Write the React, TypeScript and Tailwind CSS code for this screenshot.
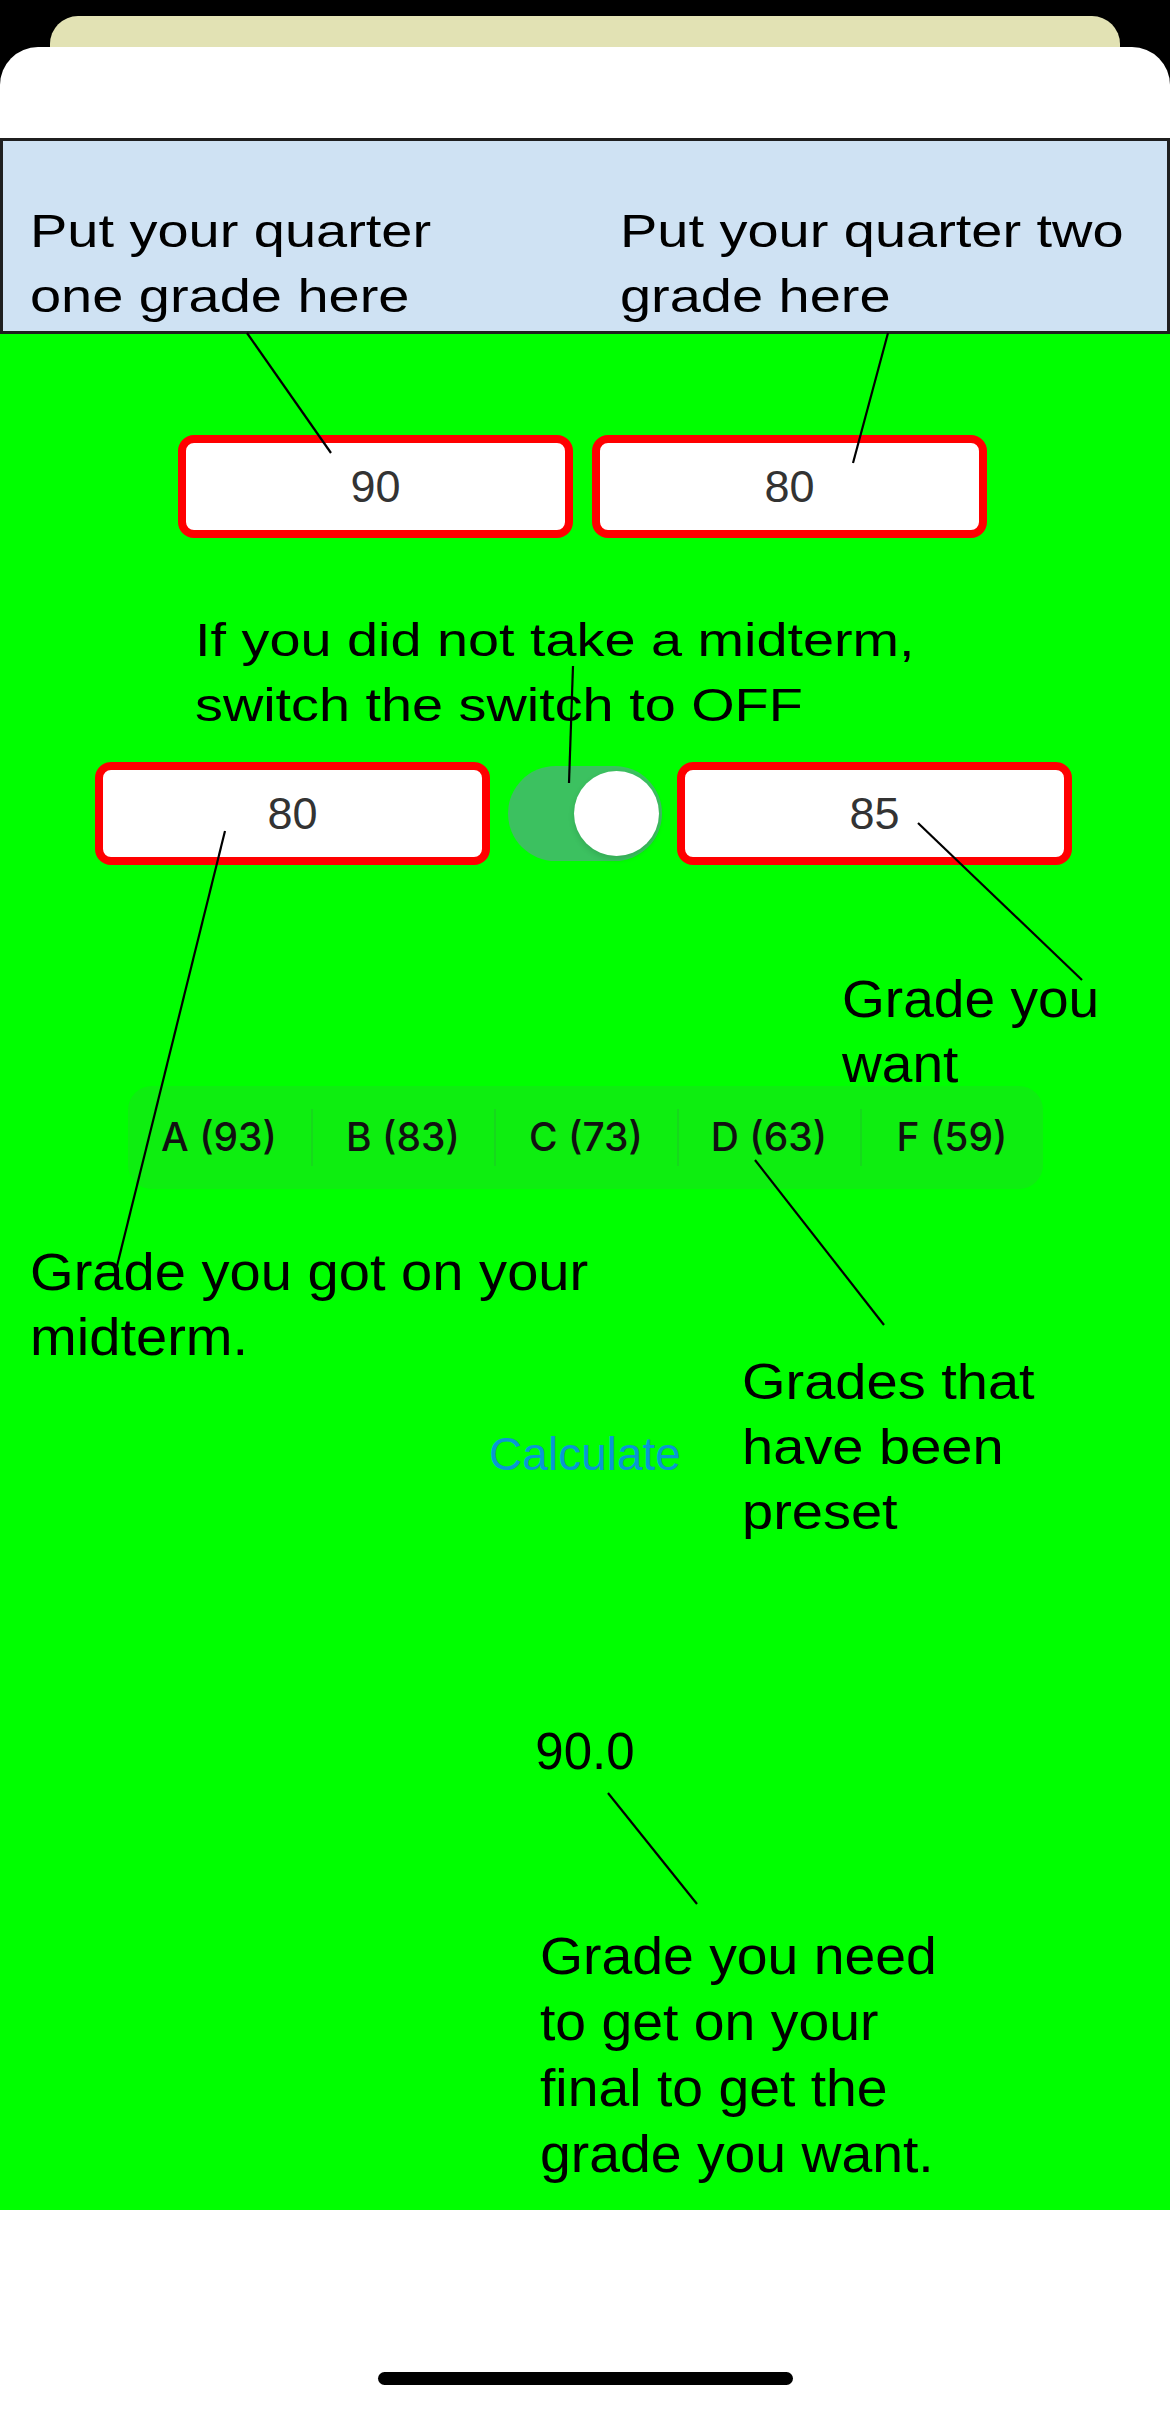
const note = "font-['Liberation_Sans',Arial,sans-serif] text-black whitespace-nowrap origin-left";

const grades = ['A (93)', 'B (83)', 'C (73)', 'D (63)', 'F (59)'];

// callout lines drawn over the app screenshot
const lines: [number, number, number, number][] = [
  [247, 333, 331, 453],
  [888, 333, 853, 463],
  [573, 666, 569, 783],
  [225, 831, 117, 1266],
  [918, 823, 1082, 980],
  [755, 1160, 884, 1325],
  [608, 1793, 697, 1904],
];

function GradeInput({ value }: { value: string }) {
  return (
    <div className="w-[395px] h-[103px] border-[8px] border-[#ff0000] rounded-[16px] bg-white shrink-0">
      <input
        readOnly
        defaultValue={value}
        className="w-full h-full bg-transparent text-center outline-none text-[45px] text-[#333] font-['Liberation_Sans',Arial,sans-serif]"
      />
    </div>
  );
}

export default function App() {
  return (
    <div className="relative w-[1170px] h-[2411px] bg-black overflow-hidden">
      <div className="h-[47px] pt-[16px] px-[50px]">
        <div className="h-full rounded-t-[28px] bg-[#e2e2b4]" />
      </div>

      <div className="bg-white rounded-t-[38px]">
        <div className="h-[91px]" />

        <div className="h-[196px] border-[3px] border-[#1f1f1f] bg-[#cfe2f3] grid grid-cols-[617px_1fr] pt-[57px]">
          <div className="pl-[27px]">
            <div className={`${note} text-[47px] leading-[65px] scale-x-[1.19]`}>
              Put your quarter
              <br />
              one grade here
            </div>
          </div>
          <div>
            <div className={`${note} text-[47px] leading-[65px] scale-x-[1.19]`}>
              Put your quarter two
              <br />
              grade here
            </div>
          </div>
        </div>

        <div className="h-[1876px] bg-[#00ff00] flex flex-col">
          <div className="mt-[101px] flex pl-[178px] gap-[19px]">
            <GradeInput value="90" />
            <GradeInput value="80" />
          </div>

          <div className="mt-[70px] pl-[195px]">
            <div className={`${note} text-[46.5px] leading-[65px] scale-x-[1.2]`}>
              If you did not take a midterm,
              <br />
              switch the switch to OFF
            </div>
          </div>

          <div className="mt-[24px] flex items-center pl-[95px]">
            <GradeInput value="80" />
            <div className="ml-[18px] mr-[15px] w-[154px] h-[95px] rounded-full bg-[#3cc160] flex items-center justify-end pr-[3px] shrink-0">
              <div className="w-[85px] h-[85px] rounded-full bg-white shadow-[0_3px_6px_rgba(0,0,0,0.12)]" />
            </div>
            <GradeInput value="85" />
          </div>

          <div className="mt-[102px] h-[119px] pl-[842px]">
            <div className={`${note} text-[51px] leading-[65px] scale-x-[1.08]`}>
              Grade you
              <br />
              want
            </div>
          </div>

          <div className="mx-auto w-[915px] h-[103px] rounded-[24px] bg-[#0eee10] flex items-center">
            {grades.map((g, i) => (
              <div key={g} className="flex-1 flex items-center h-full">
                {i > 0 && <div className="w-[2px] h-[57px] bg-[#16d91c]" />}
                <div className="flex-1 text-center text-[39px] font-medium text-[#111] font-['Inter',sans-serif]">
                  {g}
                </div>
              </div>
            ))}
          </div>

          <div className="mt-[51px] h-[110px] pl-[30px]">
            <div className={`${note} text-[51px] leading-[65px] scale-x-[1.1]`}>
              Grade you got on your
              <br />
              midterm.
            </div>
          </div>

          <div className="grid grid-cols-[1fr_194px_1fr]">
            <div />
            <button className="mt-[77px] self-start text-center whitespace-nowrap text-[46px] leading-[54px] text-[#0a96d4] font-['Liberation_Sans',Arial,sans-serif]">
              Calculate
            </button>
            <div className="pl-[60px]">
              <div className={`${note} text-[50px] leading-[65px] scale-x-[1.12]`}>
                Grades that
                <br />
                have been
                <br />
                preset
              </div>
            </div>
          </div>

          <div className="mt-[177px] text-center text-[51px] leading-[60px] text-black font-['Liberation_Sans',Arial,sans-serif]">
            90.0
          </div>

          <div className="mt-[142px] pl-[540px]">
            <div className={`${note} text-[51px] leading-[66px] scale-x-[1.085]`}>
              Grade you need
              <br />
              to get on your
              <br />
              final to get the
              <br />
              grade you want.
            </div>
          </div>
        </div>

        <div className="h-[201px] pt-[162px]">
          <div className="mx-auto w-[415px] h-[13px] rounded-full bg-black" />
        </div>
      </div>

      <svg
        className="absolute inset-0 pointer-events-none"
        width="1170"
        height="2411"
        viewBox="0 0 1170 2411"
      >
        {lines.map(([x1, y1, x2, y2], i) => (
          <line key={i} x1={x1} y1={y1} x2={x2} y2={y2} stroke="#000" strokeWidth={2.2} />
        ))}
      </svg>
    </div>
  );
}
